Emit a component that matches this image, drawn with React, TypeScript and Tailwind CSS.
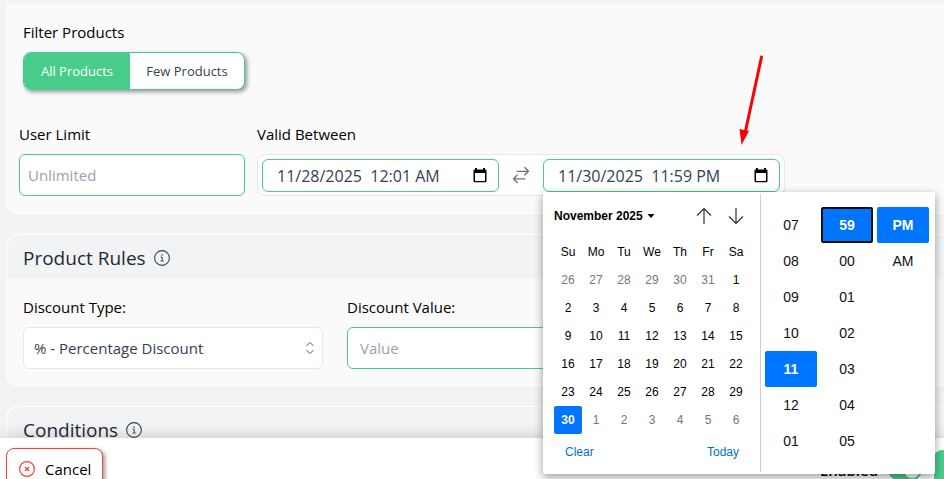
import React, { useState } from 'react';
import { HiOutlineArrowsRightLeft, HiChevronUpDown } from 'react-icons/hi2';

const WEEKDAYS = ['Su', 'Mo', 'Tu', 'We', 'Th', 'Fr', 'Sa'];

// 26 Oct - 6 Dec, the six weeks shown for November
const DAYS = [
  ...[26, 27, 28, 29, 30, 31].map((day) => ({ day, current: false })),
  ...Array.from({ length: 30 }, (_, i) => ({ day: i + 1, current: true })),
  ...[1, 2, 3, 4, 5, 6].map((day) => ({ day, current: false })),
];
const WEEKS = Array.from({ length: 6 }, (_, i) => DAYS.slice(i * 7, i * 7 + 7));

const HOURS = ['07', '08', '09', '10', '11', '12', '01'];
const MINUTES = ['59', '00', '01', '02', '03', '04', '05'];
const PERIODS = ['PM', 'AM'];

const CalendarIcon = () => (
  <svg width="14" height="15" viewBox="0 0 14 15" className="shrink-0" aria-hidden="true">
    <path
      fill="#000"
      fillRule="evenodd"
      d="M2 0h2v1.5h6V0h2v1.5h.5A1.3 1.3 0 0 1 13.5 3v10a1.3 1.3 0 0 1-1.3 1.3H1.8A1.3 1.3 0 0 1 .5 13V3a1.3 1.3 0 0 1 1.3-1.5H2zM2 5v8h10V5z"
    />
  </svg>
);

const InfoIcon = () => (
  <svg width="16" height="16" viewBox="0 0 16 16" fill="none" stroke="#374151" aria-hidden="true">
    <circle cx="8" cy="8" r="7.4" strokeWidth="1.1" />
    <path d="M6.7 7.1h1.5v3.8M6.6 11h3" strokeWidth="1" />
    <circle cx="8" cy="5" r="0.8" fill="#374151" stroke="none" />
  </svg>
);

const MonthArrow = ({ down = false }: { down?: boolean }) => (
  <svg
    width="16"
    height="18"
    viewBox="0 0 16 18"
    fill="none"
    stroke="#303030"
    strokeWidth="1.2"
    className={down ? 'rotate-180' : ''}
    aria-hidden="true"
  >
    <path d="M8 17V1.5M1 8.5l7-7 7 7" />
  </svg>
);

interface TimeColumnProps {
  label: string;
  items: string[];
  initial: string;
  focused?: boolean;
}

const TimeColumn: React.FC<TimeColumnProps> = ({ label, items, initial, focused = false }) => {
  const [selected, setSelected] = useState(initial);

  return (
    <div role="listbox" aria-label={label} className="flex w-[52px] flex-col">
      {items.map((item) => (
        <button
          key={item}
          type="button"
          role="option"
          aria-selected={item === selected}
          onClick={() => setSelected(item)}
          className={`h-9 rounded-xs text-sm ${
            item === selected ? 'bg-[#0075ff] font-bold text-white' : 'text-[#101010]'
          } ${item === selected && focused ? 'border-2 border-[#101010]' : ''}`}
        >
          {item}
        </button>
      ))}
    </div>
  );
};

const DateTimePopup = () => {
  const [selectedDay, setSelectedDay] = useState(30);

  return (
    <div className="absolute top-full left-0 z-20 flex h-[282px] rounded-b-xs bg-white py-0.5 font-['Liberation_Sans',Arial,sans-serif] shadow-[0_3px_10px_rgba(0,0,0,0.4)]">
      <div className="border-r border-[#cecece] pr-2.5 pl-[11px]">
        <div className="flex h-11 items-center justify-between">
          <button type="button" className="flex items-center gap-1 text-xs font-bold text-black">
            November 2025
            <svg width="8" height="4" viewBox="0 0 8 4" aria-hidden="true">
              <path d="M0.5 0h7L4 4z" />
            </svg>
          </button>
          <div className="flex gap-4 pr-1.5">
            <button type="button" aria-label="Previous month">
              <MonthArrow />
            </button>
            <button type="button" aria-label="Next month">
              <MonthArrow down />
            </button>
          </div>
        </div>
        <table className="border-collapse text-center text-xs">
          <thead>
            <tr>
              {WEEKDAYS.map((name) => (
                <th key={name} className="h-7 w-7 p-0 font-normal">
                  {name}
                </th>
              ))}
            </tr>
          </thead>
          <tbody>
            {WEEKS.map((week, i) => (
              <tr key={i}>
                {week.map(({ day, current }) => (
                  <td key={day} className="p-0">
                    <button
                      type="button"
                      onClick={() => current && setSelectedDay(day)}
                      className={`block h-7 w-7 rounded-xs ${
                        current && day === selectedDay
                          ? 'bg-[#0075ff] font-bold text-white'
                          : current
                          ? 'text-black'
                          : 'text-[#767676]'
                      }`}
                    >
                      {day}
                    </button>
                  </td>
                ))}
              </tr>
            ))}
          </tbody>
        </table>
        <div className="flex h-9 items-center justify-between px-[11px] text-xs text-[#0070cc]">
          <button type="button">Clear</button>
          <button type="button">Today</button>
        </div>
      </div>
      <div className="flex gap-1 pt-[13px] pr-1.5 pl-1">
        <TimeColumn label="Hours" items={HOURS} initial="11" />
        <TimeColumn label="Minutes" items={MINUTES} initial="59" focused />
        <TimeColumn label="AM/PM" items={PERIODS} initial="PM" />
      </div>
    </div>
  );
};

interface DateTimeFieldProps {
  label: string;
  value: string;
}

const DateTimeField: React.FC<DateTimeFieldProps> = ({ label, value }) => (
  <div className="flex h-[33px] w-[237px] items-center rounded-md border border-[#48cc89] bg-white pr-[11px] pl-3.5">
    <input
      type="text"
      aria-label={label}
      defaultValue={value}
      className="min-w-0 flex-1 pt-0.5 text-base whitespace-pre text-gray-700 outline-none"
    />
    <CalendarIcon />
  </div>
);

const SectionTitle = ({ children }: { children: React.ReactNode }) => (
  <div className="flex h-11 items-center gap-2 rounded-tl-xl bg-[#f2f3f5] px-4 pt-0.5 text-gray-800">
    <h2 className="text-[19px]">{children}</h2>
    <InfoIcon />
  </div>
);

const App = () => {
  const [filter, setFilter] = useState('all');

  return (
    <div className="flex h-screen flex-col overflow-hidden bg-[#f2f3f5] font-['Open_Sans',sans-serif] text-[15px] leading-6 text-black">
      <main className="flex min-h-0 flex-1 flex-col gap-5 pl-1.5">
        <section className="shrink-0 rounded-bl-xl border-b border-l border-white bg-[#fafafa]">
          <div className="h-1 bg-[#f2f3f5]" />
          <div className="px-4 pt-4">
            <div id="filter-label">Filter Products</div>
            <div
              role="group"
              aria-labelledby="filter-label"
              className="mt-2 inline-flex h-[38px] overflow-hidden rounded-lg border border-[#48cc89] bg-white text-[13px] shadow-[2px_2px_4px_rgba(0,0,0,0.4)]"
            >
              <button
                type="button"
                onClick={() => setFilter('all')}
                className={`w-[106px] ${filter === 'all' ? 'bg-[#48cc89] text-white' : 'text-gray-700'}`}
              >
                All Products
              </button>
              <button
                type="button"
                onClick={() => setFilter('few')}
                className={`w-[114px] ${filter === 'few' ? 'bg-[#48cc89] text-white' : 'text-gray-700'}`}
              >
                Few Products
              </button>
            </div>
          </div>
          <div className="flex gap-3 px-3 pt-8 pb-[17px]">
            <div className="w-[226px]">
              <label htmlFor="user-limit" className="block">
                User Limit
              </label>
              <input
                id="user-limit"
                placeholder="Unlimited"
                className="mt-2 block h-[42px] w-full rounded-md border border-[#48cc89] bg-white px-2 outline-none placeholder:text-gray-400"
              />
            </div>
            <div>
              <div>Valid Between</div>
              <div className="mt-2 flex h-[42px] items-center rounded-lg border border-gray-200 bg-white px-1">
                <DateTimeField label="Valid from" value="11/28/2025  12:01 AM" />
                <HiOutlineArrowsRightLeft size={20} className="mx-3 text-gray-500" />
                <div className="relative">
                  <DateTimeField label="Valid until" value="11/30/2025  11:59 PM" />
                  <DateTimePopup />
                  <svg
                    width="30"
                    height="90"
                    viewBox="0 0 30 90"
                    className="absolute -top-[104px] left-[195px]"
                    aria-hidden="true"
                  >
                    <path d="M23.5 2L7.5 76" stroke="#ff0000" strokeWidth="3" strokeLinecap="round" />
                    <path d="M1.5 74l9.5 2-7.5 14z" fill="#ff0000" />
                  </svg>
                </div>
              </div>
            </div>
          </div>
        </section>

        <section className="shrink-0 rounded-l-xl border border-r-0 border-white bg-[#fafafa]">
          <SectionTitle>Product Rules</SectionTitle>
          <div className="flex gap-6 p-4">
            <div className="w-[300px]">
              <label htmlFor="discount-type" className="block">
                Discount Type:
              </label>
              <div className="relative mt-2">
                <select
                  id="discount-type"
                  className="block h-[42px] w-full appearance-none rounded-md border border-gray-200 bg-white px-2.5 text-gray-700 outline-none"
                >
                  <option>% - Percentage Discount</option>
                </select>
                <HiChevronUpDown size={20} className="pointer-events-none absolute top-[11px] right-[3px] text-gray-400" />
              </div>
            </div>
            <div className="w-[300px]">
              <label htmlFor="discount-value" className="block">
                Discount Value:
              </label>
              <input
                id="discount-value"
                placeholder="Value"
                className="mt-2 block h-[42px] w-full rounded-md border border-[#48cc89] bg-white px-3 outline-none placeholder:text-gray-400"
              />
            </div>
          </div>
        </section>

        <section className="shrink-0 rounded-l-xl border border-r-0 border-white bg-[#fafafa]">
          <SectionTitle>Conditions</SectionTitle>
        </section>
      </main>

      <footer className="relative z-10 flex h-[41px] shrink-0 items-start justify-between bg-white pt-2.5 pl-1.5 shadow-[0_0_16px_rgba(0,0,0,0.2)]">
        <button
          type="button"
          className="flex h-[42px] w-[97px] shrink-0 items-center gap-2.5 rounded-lg border border-[#ef4444] bg-white pl-3 shadow-[2px_2px_4px_rgba(0,0,0,0.4)]"
        >
          <svg width="16" height="16" viewBox="0 0 16 16" fill="none" stroke="#ef4444" aria-hidden="true">
            <circle cx="8" cy="8" r="7.4" strokeWidth="1.2" />
            <path d="M6 6l4 4M10 6l-4 4" strokeWidth="1.5" />
          </svg>
          Cancel
        </button>
        <div className="flex items-start gap-3">
          <div className="flex items-center gap-2.5 pt-2.5">
            <label htmlFor="enabled" className="font-semibold">
              Enabled
            </label>
            <span className="relative h-5 w-[34px]">
              <input id="enabled" type="checkbox" defaultChecked className="peer absolute inset-0 opacity-0" />
              <span className="pointer-events-none block h-5 rounded-full bg-gray-300 peer-checked:bg-[#48cc89]" />
              <span className="pointer-events-none absolute top-0.5 right-0.5 h-4 w-4 rounded-full bg-white" />
            </span>
          </div>
          <button type="button" aria-label="Save" className="mt-0.5 h-10 w-2.5 rounded-tl-lg bg-[#48cc89]" />
        </div>
      </footer>
    </div>
  );
};

export default App;
